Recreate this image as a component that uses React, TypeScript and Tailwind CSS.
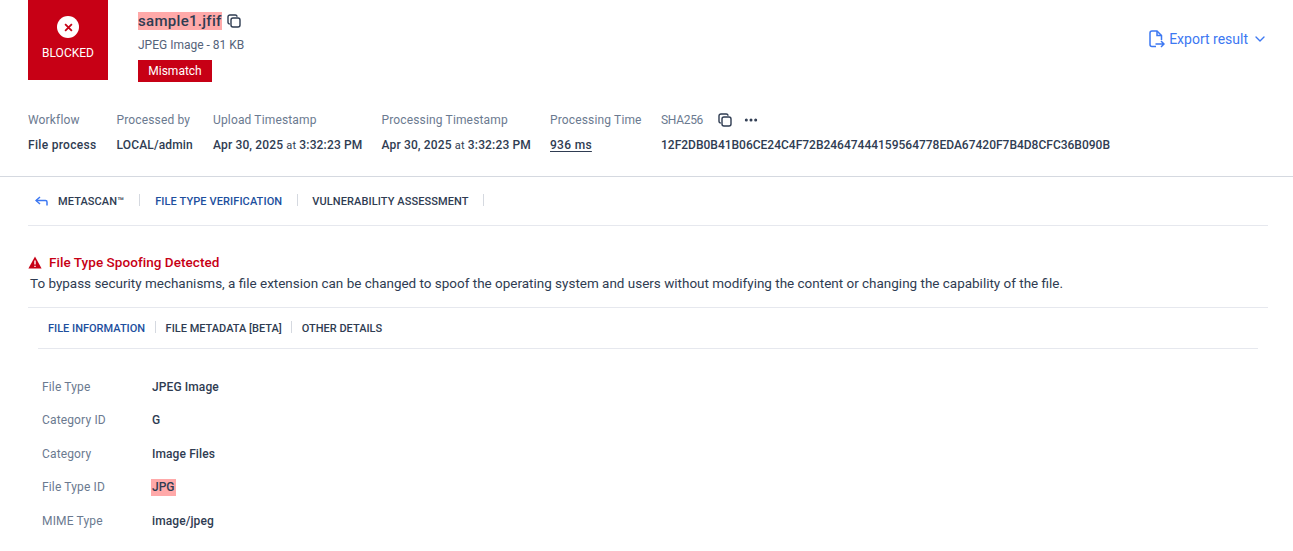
import { ChevronDown, Ellipsis } from "lucide-react";

const meta = [
  { label: "Workflow", value: "File process", width: "w-[88.5px]", tracking: "tracking-[0.3px]" },
  { label: "Processed by", value: "LOCAL/admin", width: "w-[96.5px]", tracking: "tracking-[0.15px]" },
];

const details = [
  { label: "File Type", value: "JPEG Image" },
  { label: "Category ID", value: "G" },
  { label: "Category", value: "Image Files" },
  { label: "File Type ID", value: "JPG", mismatch: true },
  { label: "MIME Type", value: "image/jpeg" },
];

function CopyIcon({ className }: { className: string }) {
  return (
    <svg viewBox="0 0 14 14" fill="none" stroke="currentColor" strokeWidth="1.4" className={className}>
      <rect x="4" y="4" width="9" height="9" rx="2" />
      <path d="M2.8 10 A1.8 1.8 0 0 1 1 8.2 V3 A2 2 0 0 1 3 1 H8.2 A1.8 1.8 0 0 1 10 2.8" />
    </svg>
  );
}

function Stamp({ label }: { label: string }) {
  return (
    <div className="w-[168.5px]">
      <div className="h-[25px] tracking-[0.15px] text-[#6b7a90]">{label}</div>
      <div className="font-[460] tracking-[0.15px] whitespace-nowrap">
        Apr 30, 2025 <span className="text-[11px] font-normal">at</span> 3:32:23 PM
      </div>
    </div>
  );
}

export default function App() {
  return (
    <div className="h-[551px] overflow-hidden bg-white text-[12px] leading-[16px] text-[#2f3c52] font-['Roboto',sans-serif]">
      {/* Header */}
      <div className="flex h-[82px] pl-[28px] pr-[25px]">
        <div className="flex h-[80px] w-[80px] flex-col items-center bg-[#c70015] pt-[16px] text-white">
          <div className="flex h-[22px] w-[22px] items-center justify-center rounded-full bg-white">
            <svg viewBox="0 0 8 8" className="h-[9px] w-[9px] text-[#c70015]" stroke="currentColor" strokeWidth="1.6">
              <path d="M1 1 L7 7 M7 1 L1 7" />
            </svg>
          </div>
          <div className="mt-[7px] text-[12px]">BLOCKED</div>
        </div>
        <div className="ml-[30px] pt-[10px]">
          <div className="flex h-[22px] items-center">
            <span className="bg-[#ffa9a9] text-[15px] leading-[18px] font-[460] tracking-[0.3px]">sample1.jfif</span>
            <CopyIcon className="ml-[5px] h-[14px] w-[14px]" />
          </div>
          <div className="mt-[5px] text-[#55637a]">JPEG Image - 81 KB</div>
          <div className="mt-[7px] w-[74px] bg-[#c70015] text-center text-[12px] leading-[22px] text-white">Mismatch</div>
        </div>
        <div className="ml-auto flex h-[77px] items-center text-[14px] text-[#3d78f2]">
          <svg viewBox="0 0 16 18" fill="none" stroke="currentColor" strokeWidth="1.5" className="h-[18px] w-[16px]">
            <path d="M7 16.5 H3 A2 2 0 0 1 1 14.5 V3 A2 2 0 0 1 3 1 H8 L12.5 5.5 V10" />
            <path d="M8 1 V5.5 H12.5" />
            <path d="M6.5 14 H15 M12 11 L15 14 L12 17" />
          </svg>
          <span className="ml-[4px]">Export result</span>
          <ChevronDown className="ml-[4px] h-[16px] w-[16px]" strokeWidth={2} />
        </div>
      </div>

      {/* File metadata */}
      <div className="flex h-[95px] border-b border-[#d5d9e0] pl-[28px] pt-[30px]">
        {meta.map((m) => (
          <div key={m.label} className={m.width}>
            <div className="h-[25px] tracking-[0.15px] text-[#6b7a90]">{m.label}</div>
            <div className={`font-[460] whitespace-nowrap ${m.tracking}`}>{m.value}</div>
          </div>
        ))}
        <Stamp label="Upload Timestamp" />
        <Stamp label="Processing Timestamp" />
        <div className="w-[111px]">
          <div className="h-[25px] tracking-[0.15px] text-[#6b7a90]">Processing Time</div>
          <div className="font-[460] tracking-[0.3px] underline underline-offset-2">936 ms</div>
        </div>
        <div>
          <div className="flex h-[25px] items-start text-[#6b7a90]">
            <span className="tracking-[-0.3px]">SHA256</span>
            <CopyIcon className="ml-[15px] mt-[1px] h-[14px] w-[14px] text-[#2f3c52]" />
            <Ellipsis className="ml-[11px] h-[16px] w-[16px] text-[#2f3c52]" strokeWidth={2.5} />
          </div>
          <div className="font-[460]">12F2DB0B41B06CE24C4F72B24647444159564778EDA67420F7B4D8CFC36B090B</div>
        </div>
      </div>

      {/* Engine tabs */}
      <div className="ml-[28px] mr-[25px] flex h-[49px] items-center border-b border-[#e6e8ee] pb-[3px] pl-[7px] text-[11px] leading-[12px] font-medium tracking-[0.1px]">
        <svg viewBox="0 0 13 10" fill="none" stroke="#3d78f2" strokeWidth="1.5" className="mt-[3px] h-[10px] w-[13px]">
          <path d="M5 1 L1 4.5 L5 8" />
          <path d="M1 4.5 H10.5 A1.5 1.5 0 0 1 12 6 V9.5" />
        </svg>
        <span className="ml-[10px] h-[12px] border-r border-[#d5d9e0] pr-[15px] pt-[2px]">METASCAN™</span>
        <span className="h-[12px] border-r border-[#d5d9e0] px-[15px] pt-[2px] text-[#1d4f9e]">FILE TYPE VERIFICATION</span>
        <span className="h-[12px] border-r border-[#d5d9e0] pl-[14px] pr-[14px] pt-[2px]">VULNERABILITY ASSESSMENT</span>
      </div>

      {/* Alert */}
      <div className="ml-[28px] mr-[25px] h-[82px] border-b border-[#e6e8ee] pl-[1px] pt-[26px]">
        <div className="-ml-px flex h-[20px] items-center text-[13.5px] font-[460] tracking-[0.05px] text-[#c70015]">
          <svg viewBox="0 0 14 13" className="mr-[7px] h-[13px] w-[14px]">
            <path fill="currentColor" d="M7 0.5 L13.6 12.5 H0.4 Z" />
            <path stroke="white" strokeWidth="1.4" d="M7 4.5 V8.5 M7 9.7 V11" />
          </svg>
          File Type Spoofing Detected
        </div>
        <div className="ml-[1px] mt-[3px] text-[13.47px] leading-[18px] whitespace-nowrap">
          To bypass security mechanisms, a file extension can be changed to spoof the operating system and users
          without modifying the content or changing the capability of the file.
        </div>
      </div>

      {/* Detail tabs */}
      <div className="ml-[38px] mr-[35px] flex h-[41px] items-center border-b border-[#e6e8ee] pb-[2px] pl-[10px] text-[11px] leading-[12px] font-medium">
        <span className="h-[12px] border-r border-[#d5d9e0] pr-[10px] pt-[2px] text-[#1d4f9e]">FILE INFORMATION</span>
        <span className="h-[12px] border-r border-[#d5d9e0] px-[9.5px] pt-[2px]">FILE METADATA [BETA]</span>
        <span className="h-[12px] px-[9.5px] pt-[2px]">OTHER DETAILS</span>
      </div>

      <div className="ml-[42px] mt-[21px]">
        {details.map((d) => (
          <div key={d.label} className="flex h-[33.5px] items-center">
            <div className="w-[110px] tracking-[0.15px] text-[#6b7a90]">{d.label}</div>
            <div className={d.mismatch ? "-ml-px bg-[#ffa9a9] px-px py-[0.5px] font-[460]" : "font-[460] tracking-[0.1px]"}>{d.value}</div>
          </div>
        ))}
      </div>
    </div>
  );
}
